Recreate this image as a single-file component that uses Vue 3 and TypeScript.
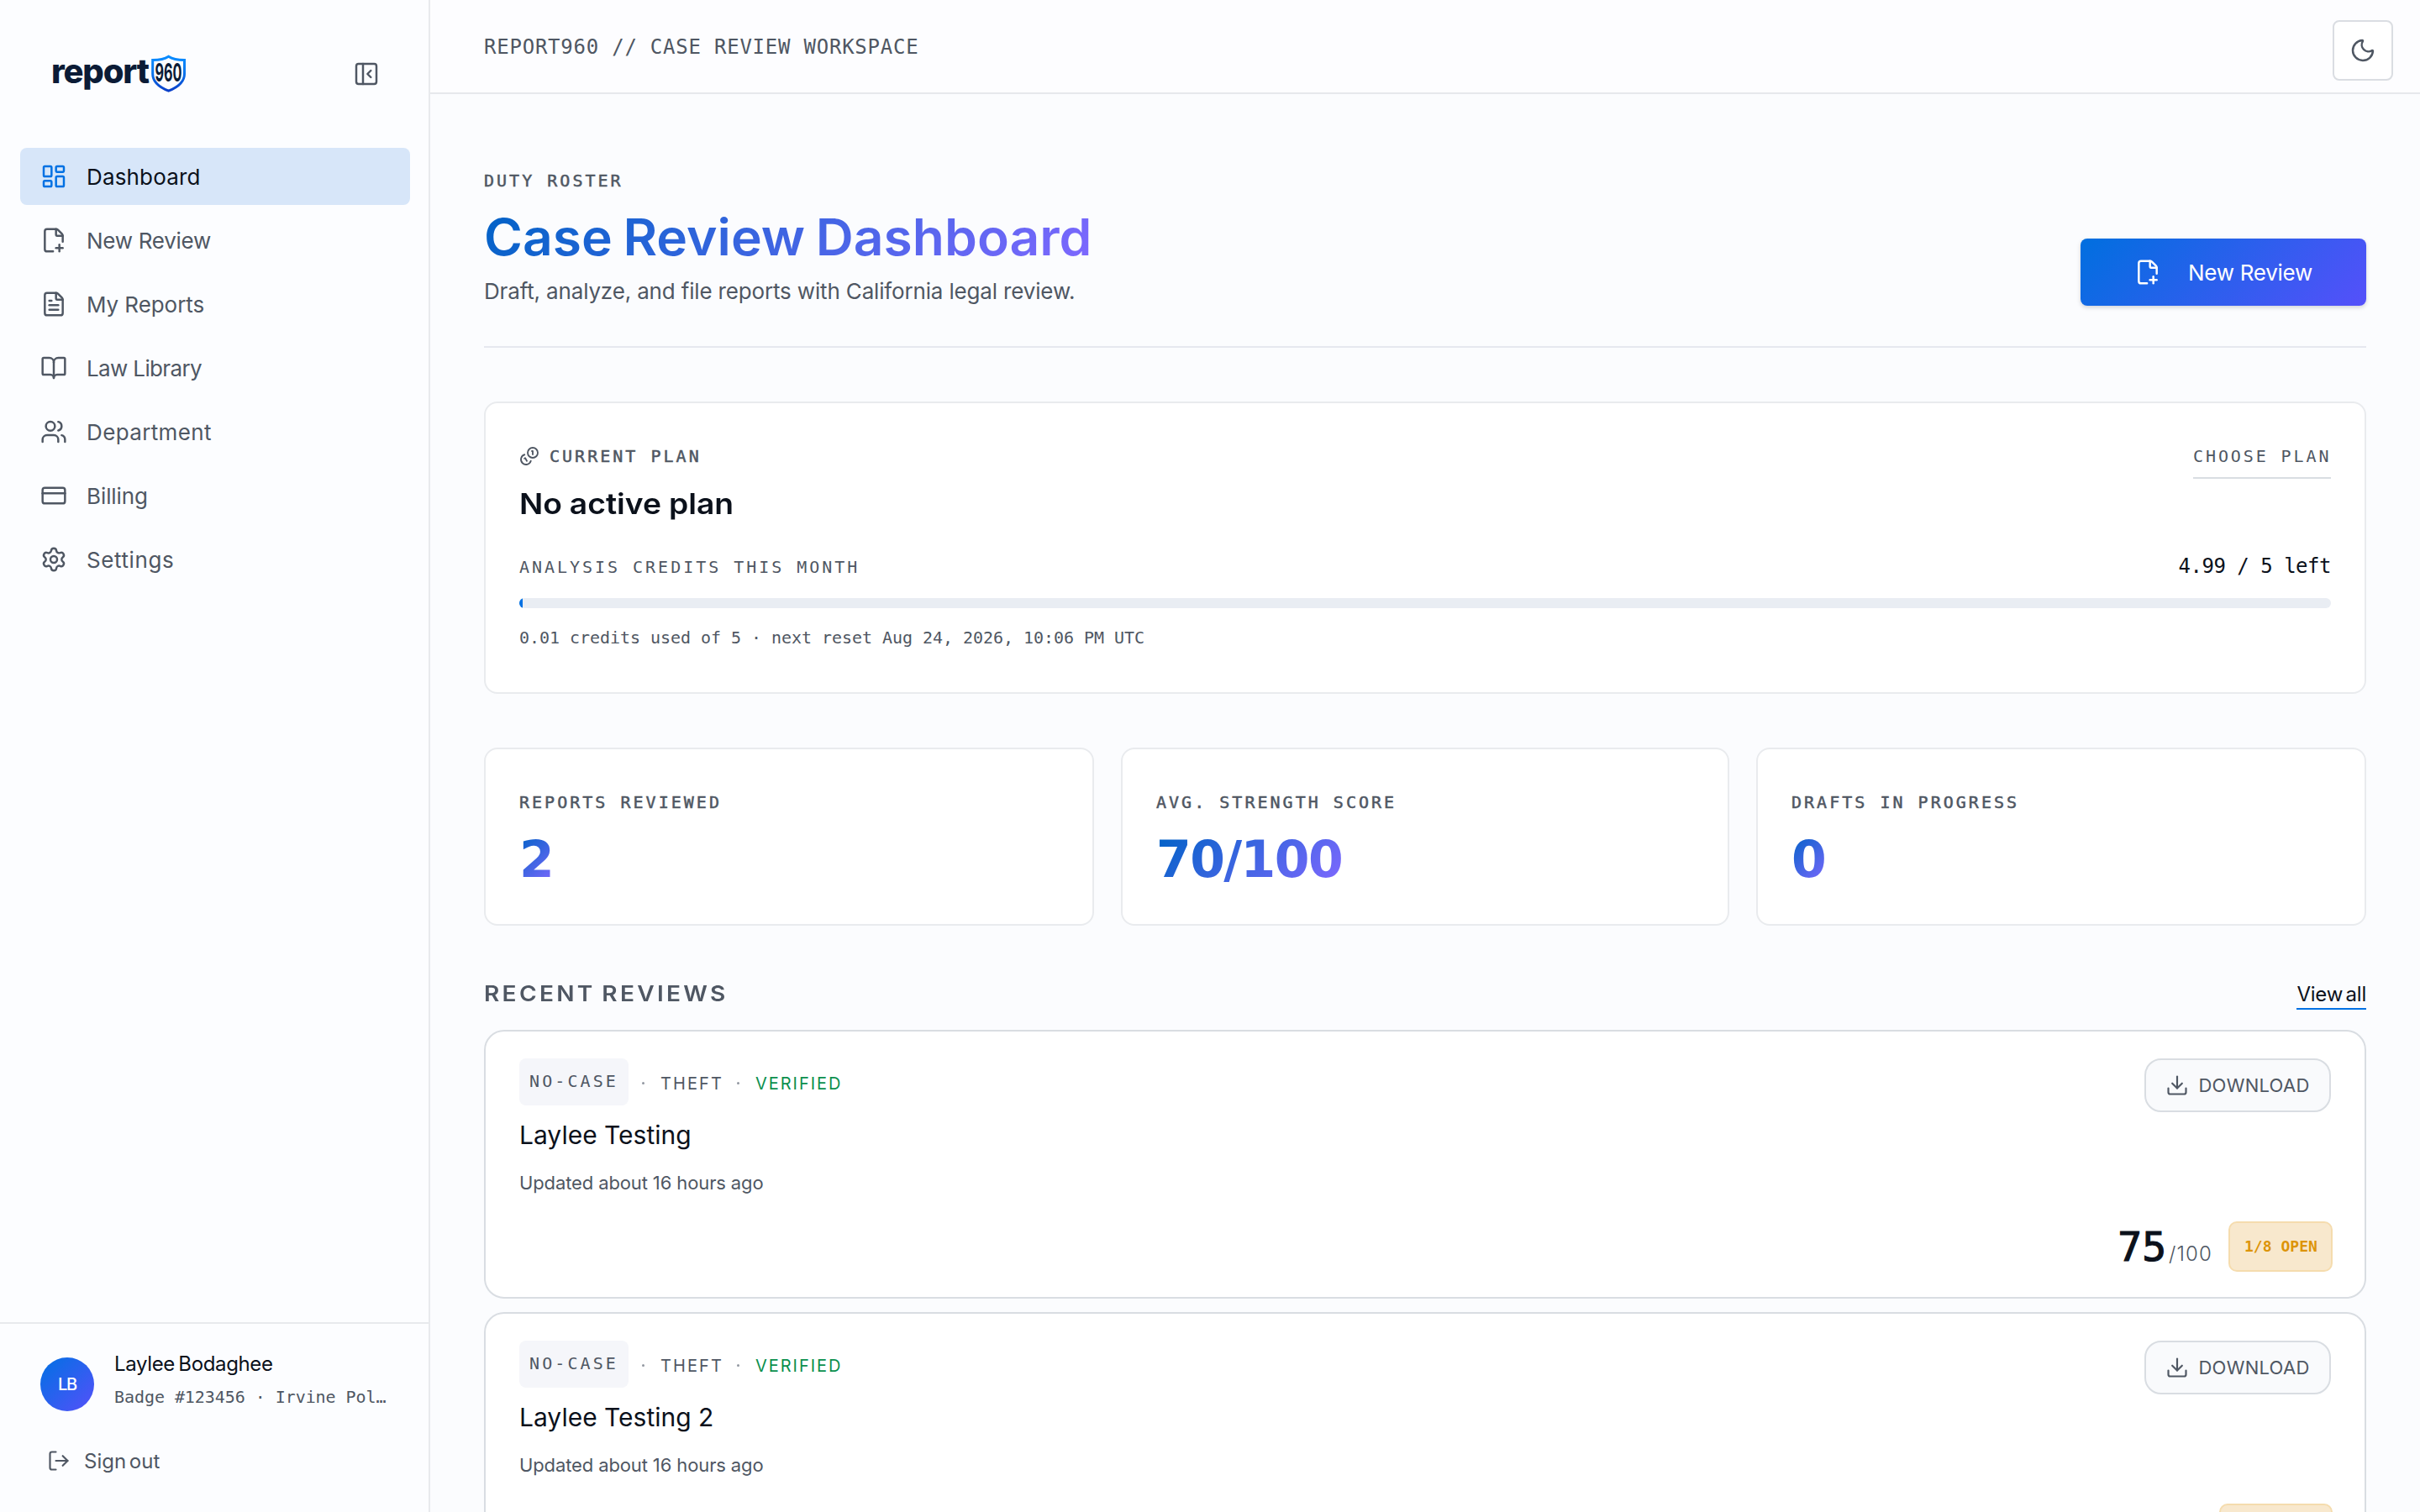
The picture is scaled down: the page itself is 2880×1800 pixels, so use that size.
<script setup lang="ts">
interface NavItem {
  label: string
  icon: string[]
  tracking: number
  active?: boolean
}

interface Review {
  title: string
  score: number
  open: string
}

const FILE_PLUS = [
  'M11.35 22H6a2 2 0 0 1-2-2V4a2 2 0 0 1 2-2h8a2.4 2.4 0 0 1 1.706.706l3.588 3.588A2.4 2.4 0 0 1 20 8v5.35',
  'M14 2v5a1 1 0 0 0 1 1h5',
  'M14 19h6',
  'M17 16v6',
]

const nav: NavItem[] = [
  {
    label: 'Dashboard',
    tracking: 0.16,
    active: true,
    icon: [
      'M4 3h5a1 1 0 0 1 1 1v7a1 1 0 0 1-1 1H4a1 1 0 0 1-1-1V4a1 1 0 0 1 1-1z',
      'M15 3h5a1 1 0 0 1 1 1v3a1 1 0 0 1-1 1h-5a1 1 0 0 1-1-1V4a1 1 0 0 1 1-1z',
      'M15 12h5a1 1 0 0 1 1 1v7a1 1 0 0 1-1 1h-5a1 1 0 0 1-1-1v-7a1 1 0 0 1 1-1z',
      'M4 16h5a1 1 0 0 1 1 1v3a1 1 0 0 1-1 1H4a1 1 0 0 1-1-1v-3a1 1 0 0 1 1-1z',
    ],
  },
  { label: 'New Review', tracking: -0.27, icon: FILE_PLUS },
  {
    label: 'My Reports',
    tracking: -0.06,
    icon: [
      'M6 22a2 2 0 0 1-2-2V4a2 2 0 0 1 2-2h8a2.4 2.4 0 0 1 1.704.706l3.588 3.588A2.4 2.4 0 0 1 20 8v12a2 2 0 0 1-2 2z',
      'M14 2v5a1 1 0 0 0 1 1h5',
      'M10 9H8',
      'M16 13H8',
      'M16 17H8',
    ],
  },
  {
    label: 'Law Library',
    tracking: -0.64,
    icon: [
      'M12 7v14',
      'M3 18a1 1 0 0 1-1-1V4a1 1 0 0 1 1-1h5a4 4 0 0 1 4 4 4 4 0 0 1 4-4h5a1 1 0 0 1 1 1v13a1 1 0 0 1-1 1h-6a3 3 0 0 0-3 3 3 3 0 0 0-3-3z',
    ],
  },
  {
    label: 'Department',
    tracking: 0.37,
    icon: [
      'M16 21v-2a4 4 0 0 0-4-4H6a4 4 0 0 0-4 4v2',
      'M16 3.128a4 4 0 0 1 0 7.744',
      'M22 21v-2a4 4 0 0 0-3-3.87',
      'M13 7a4 4 0 1 1-8 0a4 4 0 1 1 8 0',
    ],
  },
  {
    label: 'Billing',
    tracking: -0.09,
    icon: [
      'M4 5h16a2 2 0 0 1 2 2v10a2 2 0 0 1-2 2H4a2 2 0 0 1-2-2V7a2 2 0 0 1 2-2z',
      'M2 10h20',
    ],
  },
  {
    label: 'Settings',
    tracking: 0.6,
    icon: [
      'M9.671 4.136a2.34 2.34 0 0 1 4.659 0 2.34 2.34 0 0 0 3.319 1.915 2.34 2.34 0 0 1 2.33 4.033 2.34 2.34 0 0 0 0 3.831 2.34 2.34 0 0 1-2.33 4.033 2.34 2.34 0 0 0-3.319 1.915 2.34 2.34 0 0 1-4.659 0 2.34 2.34 0 0 0-3.32-1.915 2.34 2.34 0 0 1-2.33-4.033 2.34 2.34 0 0 0 0-3.831A2.34 2.34 0 0 1 6.35 6.051a2.34 2.34 0 0 0 3.319-1.915',
      'M15 12a3 3 0 1 1-6 0a3 3 0 1 1 6 0',
    ],
  },
]

const stats = [
  { label: 'REPORTS REVIEWED', value: '2' },
  { label: 'AVG. STRENGTH SCORE', value: '70/100' },
  { label: 'DRAFTS IN PROGRESS', value: '0' },
]

const reviews: Review[] = [
  { title: 'Laylee Testing', score: 75, open: '1/8 OPEN' },
  { title: 'Laylee Testing 2', score: 65, open: '2/10 OPEN' },
]

const creditsUsed = 0.01
const creditsTotal = 5
</script>

<template>
  <div class="app">
    <aside class="sidebar">
      <div class="brand">
        <svg class="logo" width="164" height="48" viewBox="0 0 164 48">
          <defs>
            <linearGradient id="shield" x1="0" y1="0" x2="0" y2="1">
              <stop offset="0" stop-color="#0a8cff" />
              <stop offset="0.45" stop-color="#0a78f0" />
              <stop offset="1" stop-color="#0a3fc8" />
            </linearGradient>
          </defs>
          <text class="logo-word" x="1" y="34.5" textLength="117" lengthAdjust="spacing">report</text>
          <path
            d="M140.6 3.2C136 6.2 129.500 7.500 121.700 7.600V24C121.700 34 129.500 39.800 140.600 44.200C151.700 39.800 159.500 34 159.500 24V7.600C151.700 7.500 145.200 6.200 140.600 3.200Z"
            fill="none"
            stroke="url(#shield)"
            stroke-width="3"
          />
          <text class="logo-num" x="124.400" y="32.800" textLength="32" lengthAdjust="spacingAndGlyphs">960</text>
        </svg>
        <svg class="icon" width="32" height="32" viewBox="0 0 24 24">
          <path d="M5 3h14a2 2 0 0 1 2 2v14a2 2 0 0 1-2 2H5a2 2 0 0 1-2-2V5a2 2 0 0 1 2-2z" />
          <path d="M9 3v18" />
          <path d="m16 15-3-3 3-3" />
        </svg>
      </div>

      <nav class="nav">
        <a v-for="item in nav" :key="item.label" class="nav-item" :class="{ active: item.active }">
          <svg class="icon" width="32" height="32" viewBox="0 0 24 24">
            <path v-for="d in item.icon" :key="d" :d="d" />
          </svg>
          <span :style="{ letterSpacing: item.tracking + 'px' }">{{ item.label }}</span>
        </a>
      </nav>

      <div class="account">
        <div class="profile">
          <div class="avatar">LB</div>
          <div class="who">
            <div class="name">Laylee Bodaghee</div>
            <div class="badge-no">Badge #123456 · Irvine Pol…</div>
          </div>
        </div>
        <a class="signout">
          <svg class="icon" width="28" height="28" viewBox="0 0 24 24">
            <path d="m16 17 5-5-5-5" />
            <path d="M21 12H9" />
            <path d="M9 21H5a2 2 0 0 1-2-2V5a2 2 0 0 1 2-2h4" />
          </svg>
          <span>Sign out</span>
        </a>
      </div>
    </aside>

    <div class="page">
      <header class="topbar">
        <div class="crumb">REPORT960 // CASE REVIEW WORKSPACE</div>
        <button class="theme">
          <svg class="icon" width="32" height="32" viewBox="0 0 24 24">
            <path d="M20.985 12.486a9 9 0 1 1-9.473-9.472c.405-.022.617.46.402.803a6 6 0 0 0 8.268 8.268c.344-.215.825-.004.803.401" />
          </svg>
        </button>
      </header>

      <main class="content">
        <section class="head">
          <div>
            <div class="eyebrow">DUTY ROSTER</div>
            <h1 class="title">Case Review Dashboard</h1>
            <p class="subtitle">Draft, analyze, and file reports with California legal review.</p>
          </div>
          <button class="primary">
            <svg class="icon" width="32" height="32" viewBox="0 0 24 24">
              <path v-for="d in FILE_PLUS" :key="d" :d="d" />
            </svg>
            <span>New Review</span>
          </button>
        </section>

        <section class="card plan">
          <div class="plan-top">
            <div>
              <div class="plan-label">
                <svg class="icon" width="24" height="24" viewBox="0 0 24 24">
                  <path d="M13.744 17.736a6 6 0 1 1-7.48-7.48" />
                  <path d="M15 6h1v4" />
                  <path d="m6.134 14.768.866-.5 2 3.464" />
                  <circle cx="16" cy="8" r="6" />
                </svg>
                <span class="eyebrow">CURRENT PLAN</span>
              </div>
              <h2 class="plan-name">No active plan</h2>
            </div>
            <a class="choose">CHOOSE PLAN</a>
          </div>
          <div class="credits">
            <span class="credits-label">ANALYSIS CREDITS THIS MONTH</span>
            <span class="credits-left">4.99 / 5 left</span>
          </div>
          <div class="bar">
            <div class="fill" :style="{ width: (creditsUsed / creditsTotal) * 100 + '%' }"></div>
          </div>
          <p class="credits-note">0.01 credits used of 5 · next reset Aug 24, 2026, 10:06 PM UTC</p>
        </section>

        <section class="stats">
          <div v-for="s in stats" :key="s.label" class="card stat">
            <div class="eyebrow">{{ s.label }}</div>
            <div class="stat-value">{{ s.value }}</div>
          </div>
        </section>

        <section class="recent">
          <h2 class="recent-title">RECENT REVIEWS</h2>
          <a class="view-all">View all</a>
        </section>

        <section class="reviews">
          <article v-for="r in reviews" :key="r.title" class="review">
            <div class="review-top">
              <div>
                <div class="meta">
                  <span class="tag">NO-CASE</span>
                  <i class="dot"></i>
                  <span class="kind">THEFT</span>
                  <i class="dot"></i>
                  <span class="kind verified">VERIFIED</span>
                </div>
                <h3 class="review-title">{{ r.title }}</h3>
                <p class="updated">Updated about 16 hours ago</p>
              </div>
              <button class="download">
                <svg class="icon" width="28" height="28" viewBox="0 0 24 24">
                  <path d="M12 15V3" />
                  <path d="M21 15v4a2 2 0 0 1-2 2H5a2 2 0 0 1-2-2v-4" />
                  <path d="m7 10 5 5 5-5" />
                </svg>
                <span>DOWNLOAD</span>
              </button>
            </div>
            <div class="review-foot">
              <div class="score">
                <span class="score-num">{{ r.score }}</span>
                <span class="score-max">/100</span>
              </div>
              <span class="open">{{ r.open }}</span>
            </div>
          </article>
        </section>
      </main>
    </div>
  </div>
</template>

<style>
body {
  margin: 0;
  background: #fbfcfe;
}
</style>

<style scoped>
.app {
  --ink: #0b111b;
  --muted: #4f5763;
  --mono: "DejaVu Sans Mono", "Liberation Mono", monospace;
  display: flex;
  width: 2880px;
  height: 1800px;
  overflow: hidden;
  background: #fbfcfe;
  color: var(--ink);
  font-family: Inter, "Liberation Sans", sans-serif;
}
.app * {
  box-sizing: border-box;
}
h1, h2, h3, p {
  margin: 0;
}
button {
  padding: 0;
  border: 0;
  font-family: inherit;
}
.icon {
  flex: none;
  fill: none;
  stroke: currentColor;
  stroke-width: 1.85;
  stroke-linecap: round;
  stroke-linejoin: round;
}

/* Sidebar */
.sidebar {
  flex: none;
  display: flex;
  flex-direction: column;
  width: 512px;
  border-right: 2px solid #e8eaed;
  background: #fcfdff;
  color: var(--muted);
}
.brand {
  display: flex;
  align-items: center;
  justify-content: space-between;
  height: 176px;
  padding: 0 58px 0 60px;
}
.logo {
  display: block;
  overflow: visible;
}
.logo-word {
  font: 800 40px Inter, sans-serif;
  fill: #0b1b36;
}
.logo-num {
  font: 700 30px Inter, sans-serif;
  fill: #0b1b36;
}
.nav {
  flex: 1;
  display: flex;
  flex-direction: column;
  gap: 8px;
  padding: 0 22px 0 24px;
}
.nav-item {
  display: flex;
  align-items: center;
  gap: 23px;
  height: 68px;
  padding: 0 24px;
  border-radius: 8px;
  font-size: 26px;
}
.nav-item.active {
  background: #d7e6f9;
  color: var(--ink);
}
.nav-item.active .icon {
  color: #0071e3;
}
.account {
  height: 226px;
  padding: 31px 48px 0;
  border-top: 2px solid #e8eaed;
}
.profile {
  display: flex;
  gap: 24px;
}
.avatar {
  flex: none;
  width: 64px;
  height: 64px;
  margin-top: 9px;
  border-radius: 50%;
  background: linear-gradient(135deg, #0071e3, #5550fa);
  color: #fff;
  font-size: 20px;
  font-weight: 500;
  line-height: 65px;
  letter-spacing: -1.2px;
  text-align: center;
}
.who {
  display: flex;
  flex-direction: column;
  gap: 9px;
  padding-top: 1px;
  white-space: nowrap;
}
.name {
  color: var(--ink);
  font-size: 24px;
  line-height: 32px;
  letter-spacing: -0.36px;
  word-spacing: -2px;
}
.badge-no {
  font: 20px/28px var(--mono);
  letter-spacing: -0.06px;
}
.signout {
  display: flex;
  align-items: center;
  gap: 16px;
  height: 32px;
  margin: 43px 0 0 8px;
  font-size: 24px;
  word-spacing: -3px;
}

/* Top bar */
.page {
  flex: 1;
  display: flex;
  flex-direction: column;
}
.topbar {
  flex: none;
  display: flex;
  align-items: flex-start;
  justify-content: space-between;
  height: 112px;
  padding: 24px 32px 0 64px;
  border-bottom: 2px solid #e6e8ec;
  background: #fdfdff;
}
.crumb {
  color: var(--muted);
  font: 24px/64px var(--mono);
  letter-spacing: 0.77px;
}
.theme {
  display: flex;
  align-items: center;
  justify-content: center;
  width: 72px;
  height: 72px;
  border: 2px solid #dadde2;
  border-radius: 8px;
  background: #fff;
  color: var(--muted);
}

/* Page heading */
.content {
  padding: 89px 64px 0;
}
.eyebrow {
  color: var(--muted);
  font: 20px/28px var(--mono);
  letter-spacing: 3.02px;
  -webkit-text-stroke: 0.5px currentColor;
}
.head {
  display: flex;
  align-items: flex-end;
  justify-content: space-between;
  padding-bottom: 48px;
  border-bottom: 2px solid #e6e8ef;
}
.title {
  width: fit-content;
  margin-top: 17px;
  background: linear-gradient(135deg, #0062c6 0%, #7f68ff 100%);
  background-clip: text;
  -webkit-background-clip: text;
  color: transparent;
  font-size: 60px;
  font-weight: 600;
  line-height: 72px;
  word-spacing: -3px;
  transform: scaleX(1.039);
  transform-origin: left;
}
.subtitle {
  margin-top: 11px;
  margin-bottom: -1px;
  color: var(--muted);
  font-size: 26px;
  line-height: 36px;
  letter-spacing: -0.16px;
}
.primary {
  display: flex;
  align-items: center;
  justify-content: center;
  gap: 32px;
  width: 340px;
  height: 80px;
  border-radius: 8px;
  background: linear-gradient(135deg, #006fdf, #5550fa);
  box-shadow: 0 2px 5px rgba(10, 20, 40, 0.18);
  color: #fff;
  font-size: 26px;
  letter-spacing: -0.27px;
}

/* Plan */
.card {
  border: 2px solid #e9ebee;
  border-radius: 16px;
  background: #fff;
}
.plan {
  height: 348px;
  margin-top: 64px;
  padding: 49px 40px 0;
}
.plan-top {
  display: flex;
  align-items: flex-start;
  justify-content: space-between;
}
.plan-label {
  display: flex;
  align-items: center;
  gap: 12px;
  color: var(--muted);
}
.plan-name {
  width: fit-content;
  margin-top: 21px;
  font-size: 34px;
  font-weight: 600;
  line-height: 44px;
  word-spacing: -0.5px;
  transform: scaleX(1.096);
  transform-origin: left;
}
.choose {
  width: 164px;
  height: 41px;
  border-bottom: 2px solid #d9dde2;
  color: var(--muted);
  font: 20px/28px var(--mono);
  letter-spacing: 2.9px;
  white-space: nowrap;
}
.credits {
  display: flex;
  align-items: baseline;
  justify-content: space-between;
  margin-top: 36px;
}
.credits-label {
  color: var(--muted);
  font: 20px/28px var(--mono);
  letter-spacing: 2.97px;
}
.credits-left {
  font: 24px/32px var(--mono);
  letter-spacing: -0.49px;
}
.bar {
  height: 12px;
  margin-top: 22px;
  border-radius: 6px;
  background: #e9edf3;
  overflow: hidden;
}
.fill {
  height: 100%;
  background: #0071e3;
}
.credits-note {
  margin-top: 21px;
  color: var(--muted);
  font: 20px/28px var(--mono);
  letter-spacing: -0.04px;
}

/* Stats */
.stats {
  display: grid;
  grid-template-columns: 726px 724px 726px;
  gap: 32px;
  margin-top: 64px;
}
.stat {
  height: 212px;
  padding: 49px 40px 0;
}
.stat-value {
  width: fit-content;
  margin-top: 24px;
  background: linear-gradient(135deg, #0062c6 0%, #7f68ff 100%);
  background-clip: text;
  -webkit-background-clip: text;
  color: transparent;
  font-family: "DejaVu Sans", Inter, sans-serif;
  font-size: 60px;
  font-weight: 700;
  line-height: 60px;
  letter-spacing: -1.6px;
}

/* Reviews */
.recent {
  display: flex;
  align-items: baseline;
  justify-content: space-between;
  margin-top: 61px;
}
.recent-title {
  color: var(--muted);
  font-size: 26px;
  font-weight: 600;
  line-height: 40px;
  letter-spacing: 3.05px;
  word-spacing: -2.5px;
  transform: scaleX(1.08);
  transform-origin: left;
}
.view-all {
  border-bottom: 2px solid #0071e3;
  font-size: 24px;
  line-height: 33px;
  letter-spacing: -0.23px;
  word-spacing: -3px;
}
.reviews {
  display: flex;
  flex-direction: column;
  gap: 16px;
  margin-top: 23px;
}
.review {
  display: flex;
  flex-direction: column;
  justify-content: space-between;
  height: 320px;
  padding: 32px 40px 30px;
  border: 2px solid #d9dde2;
  border-radius: 24px;
  background: #fff;
}
.review-top {
  display: flex;
  align-items: flex-start;
  justify-content: space-between;
}
.meta {
  display: flex;
  align-items: center;
  height: 56px;
  color: var(--muted);
}
.tag {
  width: 130px;
  height: 56px;
  padding-left: 12px;
  border-radius: 8px;
  background: #f5f6fa;
  font: 20px/54px var(--mono);
  letter-spacing: 3.1px;
}
.dot {
  width: 3px;
  height: 3px;
  margin: 3px 19px 0 16px;
  border-radius: 50%;
  background: #9298a1;
}
.kind {
  font-size: 20px;
  line-height: 30px;
  padding-top: 3px;
  letter-spacing: 2.1px;
}
.verified {
  color: #0b8f4d;
  letter-spacing: 1.96px;
}
.review-title {
  margin-top: 15px;
  font-size: 30px;
  font-weight: 400;
  line-height: 40px;
}
.updated {
  margin-top: 21px;
  color: var(--muted);
  font-size: 22px;
  line-height: 32px;
  letter-spacing: -0.12px;
}
.download {
  display: flex;
  align-items: center;
  justify-content: center;
  gap: 11px;
  width: 222px;
  height: 64px;
  border: 2px solid #d9dde2;
  border-radius: 20px;
  background: #f9fafc;
  color: var(--muted);
  font-size: 22px;
  letter-spacing: 0.28px;
}
.review-foot {
  display: flex;
  align-items: center;
  justify-content: flex-end;
  gap: 19px;
  height: 60px;
  margin-right: -2px;
}
.score {
  display: flex;
  align-items: baseline;
  padding-top: 9px;
  line-height: 60px;
}
.score-num {
  font-family: var(--mono);
  font-size: 48px;
  -webkit-text-stroke: 1.2px currentColor;
}
.score-max {
  margin-left: 3px;
  color: var(--muted);
  font-size: 24px;
  font-weight: 300;
  letter-spacing: 1.1px;
}
.open {
  height: 60px;
  padding: 0 16px 0 17px;
  border: 2px solid #f5dcae;
  border-radius: 10px;
  background: #f8e8cd;
  color: #dd9408;
  font: 700 18px/56px var(--mono);
  letter-spacing: 0.05px;
}
</style>
